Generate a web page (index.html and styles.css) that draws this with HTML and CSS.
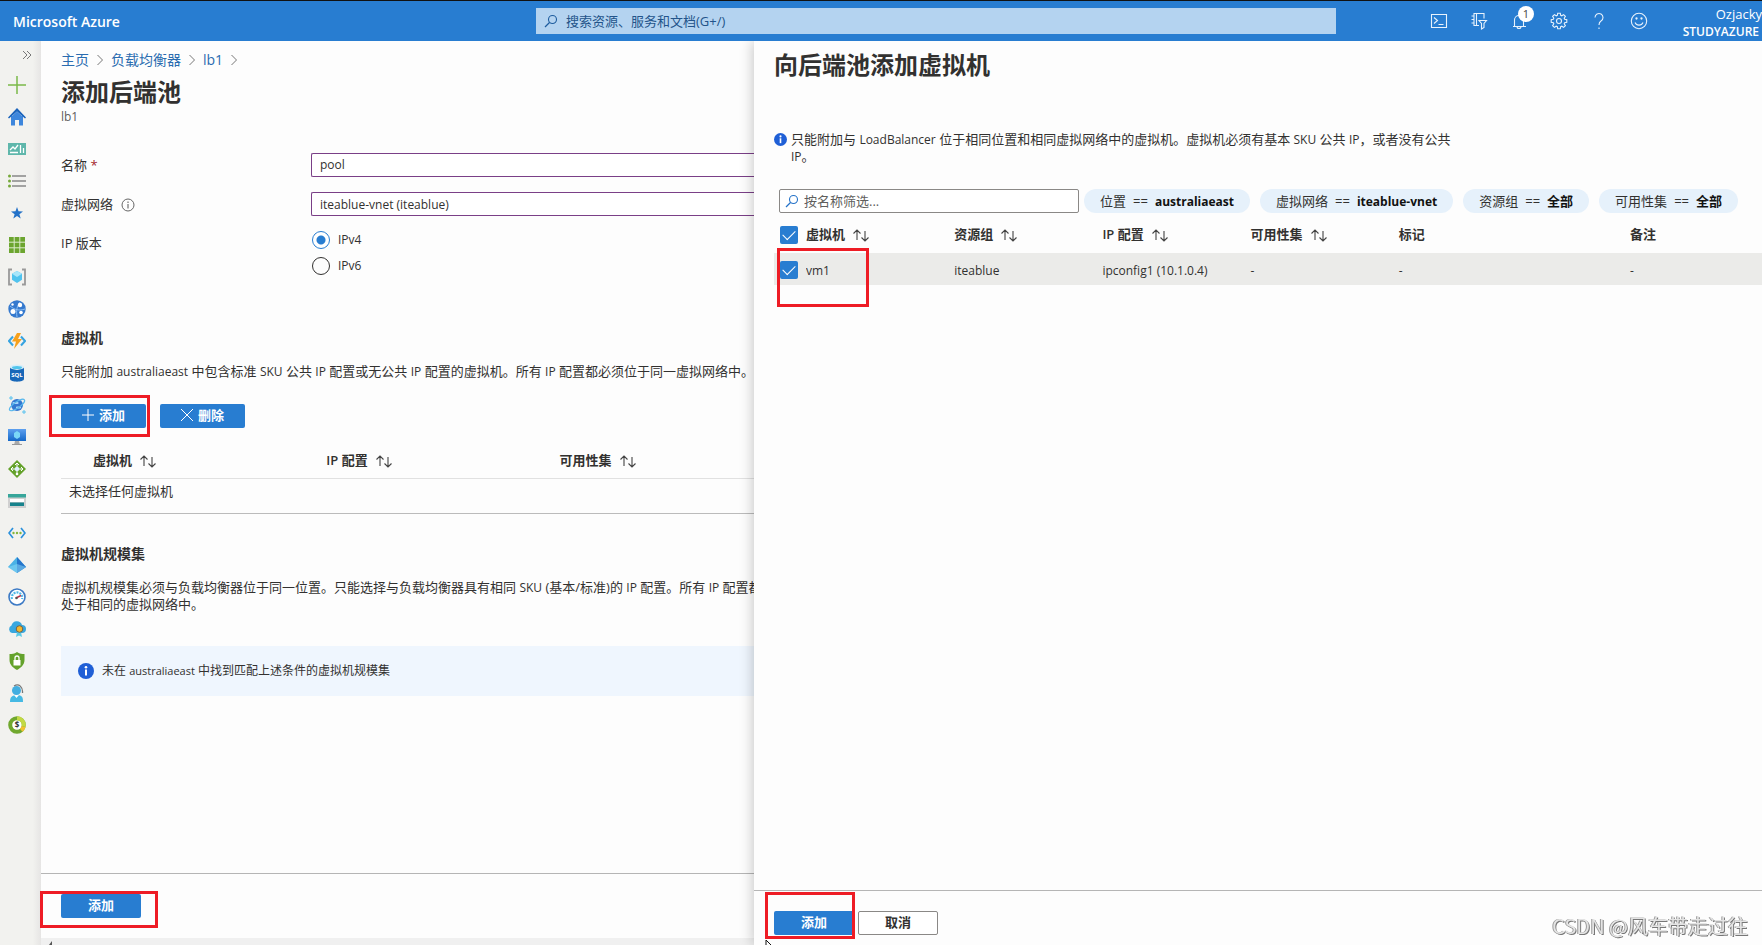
FILE: index.html
```html
<!DOCTYPE html>
<html lang="zh-CN">
<head>
<meta charset="utf-8">
<title>添加后端池 - Microsoft Azure</title>
<link rel="stylesheet" href="styles.css">
</head>
<body>
<svg class="defs" aria-hidden="true">
  <defs>
    <symbol id="sort" viewBox="0 0 18 14"><path d="M5 12V2M1.500 5.500L5 2l3.500 3.500M13 3v10M9.500 9.500L13 13l3.500-3.500" fill="none" stroke="#444" stroke-width="1.100"/></symbol>
    <symbol id="info" viewBox="0 0 16 16"><circle cx="8" cy="8" r="8" fill="#1f5fd6"/><circle cx="8" cy="4.200" r="1.300" fill="#fff"/><path d="M8 6.500v6" stroke="#fff" stroke-width="2"/></symbol>
    <symbol id="search" viewBox="0 0 14 14"><circle cx="8.500" cy="5.500" r="4" fill="none" stroke="currentColor" stroke-width="1.100"/><path d="M5.500 8.500L1 13" stroke="currentColor" stroke-width="1.200"/></symbol>
    <symbol id="crumb" viewBox="0 0 8 12"><path d="M1.500 1l5 5-5 5" fill="none" stroke="#777" stroke-width="1"/></symbol>
    <linearGradient id="gb" x1="0" y1="0" x2="0" y2="1"><stop offset="0" stop-color="#5ea0ef"/><stop offset="1" stop-color="#1468c8"/></linearGradient>
  </defs>
</svg>
<header class="topbar">
  <a class="brand" href="#">Microsoft Azure</a>
  <label class="global-search">
    <svg width="14" height="14"><use href="#search"/></svg>
    <input type="text" placeholder="搜索资源、服务和文档(G+/)" aria-label="搜索">
  </label>
  <nav class="tools">
    <button aria-label="Cloud Shell"><svg width="18" height="18" viewBox="0 0 18 18"><path d="M1.500 2.500h15v13h-15zM4 5.500l3.500 3L4 11.500M8.500 12.500h5"/></svg></button>
    <button aria-label="目录和订阅"><svg width="18" height="18" viewBox="0 0 18 18"><path d="M9 13.500H4v-12h10v5M6.500 1.500v12M1.500 4H4M1.500 7.500H4M1.500 11H4M9 8.500h7.500L14 11.500v4l-2.500 1.500v-5.500z"/></svg></button>
    <button class="bell" aria-label="通知"><svg width="18" height="18" viewBox="0 0 18 18"><path d="M3 14.500h13M4.500 14.500V8a4.500 4.500 0 0 1 9 0v6.500M7 14.500a2 2 0 0 0 4 0"/></svg><span class="badge">1</span></button>
    <button aria-label="设置"><svg width="18" height="18" viewBox="0 0 18 18"><circle cx="9" cy="9" r="2.500"/><path d="M7.700 1.200h2.600l.4 2.100 1.100.5 1.800-1.200 1.800 1.800-1.200 1.800.5 1.100 2.100.4v2.600l-2.100.4-.5 1.100 1.200 1.800-1.800 1.800-1.800-1.200-1.100.5-.4 2.100H7.700l-.4-2.100-1.100-.5-1.800 1.200-1.800-1.800 1.200-1.800-.5-1.100-2.100-.4V7.700l2.100-.4.5-1.100-1.200-1.800 1.800-1.800 1.800 1.200 1.100-.5z"/></svg></button>
    <button aria-label="帮助"><svg width="18" height="18" viewBox="0 0 18 18"><path d="M5 5.500a4 4 0 1 1 6 3.500c-1.500 1-2 1.800-2 4M9 15.500v1.500"/></svg></button>
    <button aria-label="反馈"><svg width="18" height="18" viewBox="0 0 18 18"><circle cx="9" cy="9" r="7.700"/><path d="M5 10.500c1.500 3.500 6.500 3.500 8 0"/><circle cx="6.500" cy="6.500" r=".6"/><circle cx="11.500" cy="6.500" r=".6"/></svg></button>
  </nav>
  <div class="account"><span class="user">Ozjacky</span><span class="tenant">STUDYAZURE</span></div>
</header>

<div class="workspace">
  <nav class="rail" aria-label="收藏夹">
    <button class="expand" aria-label="展开"><svg width="10" height="10" viewBox="0 0 10 10"><path d="M1 1l4 4-4 4M5 1l4 4-4 4" fill="none" stroke="#777"/></svg></button>
    <a href="#" aria-label="创建资源"><svg viewBox="0 0 18 18"><path d="M9 0v18M0 9h18" stroke="#7bb94a" stroke-width="1.500"/></svg></a>
    <a href="#" aria-label="主页"><svg viewBox="0 0 18 18"><path d="M3 8h12v9.500h-4V12H7v5.500H3z" fill="#3d86dc"/><path d="M0 9.500L9 0l9 9.500-1 1L9 3.500l-8 7z" fill="#1b63bb"/><path d="M3 9l6-5.500L15 9z" fill="#3d86dc"/></svg></a>
    <a href="#" aria-label="仪表板"><svg viewBox="0 0 18 18"><path d="M0 3h18v12H0z" fill="#5fb7ab"/><path d="M2 10l3-3 2 2 3-4M2 12.500h8M12.500 5v8M15.500 8v5" fill="none" stroke="#fff" stroke-width="1.300"/></svg></a>
    <a href="#" aria-label="所有服务"><svg viewBox="0 0 18 18"><path d="M4 4h14M4 9h14M4 14h14" stroke="#888" stroke-width="1.400"/><g fill="#76a93a"><circle cx="1.500" cy="4" r="1.500"/><circle cx="1.500" cy="9" r="1.500"/><circle cx="1.500" cy="14" r="1.500"/></g></svg></a>
    <a href="#" aria-label="收藏"><svg viewBox="0 0 18 18"><path d="M9 3l1.500 4.200 4.500.2-3.600 2.800 1.300 4.300L9 12l-3.700 2.500 1.300-4.300L3 7.400l4.500-.2z" fill="#2472c8"/></svg></a>
    <a href="#" aria-label="所有资源"><svg viewBox="0 0 18 18"><path d="M1 1h16v16H1z" fill="#6ca52f"/><path d="M6.200 1v16M11.800 1v16M1 6.200h16M1 11.800h16" stroke="#dcebcb"/></svg></a>
    <a href="#" aria-label="资源组"><svg viewBox="0 0 18 18"><path d="M4 1.500H1v15h3M14 1.500h3v15h-3" fill="none" stroke="#999" stroke-width="1.800"/><path d="M9 3l5 2.800v6L9 15l-5-3.200v-6z" fill="#50c3ee"/><path d="M9 3l5 2.800L9 9 4 5.800z" fill="#a8e6fa"/></svg></a>
    <a href="#" aria-label="应用服务"><svg viewBox="0 0 18 18"><circle cx="9" cy="9" r="8.700" fill="#3479ce"/><path d="M2 6c5 4 9 5 15 3M12 2c-3 4-4 8-3 15" stroke="#8dc0f5" fill="none"/><g fill="#fff"><circle cx="5" cy="11.500" r="2.500"/><circle cx="12" cy="5" r="2.200"/><circle cx="13" cy="12.500" r="1.800"/><circle cx="4.500" cy="4.500" r="1.200"/></g></svg></a>
    <a href="#" aria-label="函数应用"><svg viewBox="0 0 18 18"><path d="M5 4.500L1 9l4 4.500M13 4.500L17 9l-4 4.500" fill="none" stroke="#36a3e0" stroke-width="2"/><path d="M9 1h4l-3 6h4L6 17l2-7.500H4z" fill="#f7a11b"/></svg></a>
    <a href="#" aria-label="SQL 数据库"><svg viewBox="0 0 18 18"><path d="M2 3v12c0 3.500 14 3.500 14 0V3z" fill="#1767b8"/><ellipse cx="9" cy="3.200" rx="7" ry="2.700" fill="#d7eefa"/><ellipse cx="9" cy="3.500" rx="5" ry="1.500" fill="#50c5ec"/><text x="9" y="12.500" class="svg-sql">SQL</text></svg></a>
    <a href="#" aria-label="Azure Cosmos DB"><svg viewBox="0 0 18 18"><circle cx="9" cy="9" r="6" fill="#3478d0"/><path d="M5.500 7h4M9 11.500h3" stroke="#a8d4fa" stroke-width="2.200" stroke-linecap="round"/><ellipse cx="9" cy="9" rx="9" ry="3" fill="none" stroke="#58b8ed" stroke-width="1.200" transform="rotate(-35 9 9)"/><path d="M3 0v4M1 2h4M16 14v4M14 16h4" stroke="#58c2ef"/></svg></a>
    <a href="#" aria-label="虚拟机"><svg viewBox="0 0 18 18"><path d="M0 1h18v12H0z" fill="url(#gb)"/><path d="M9 3l3 2v4l-3 2-3-2V5z" fill="#7ad7f7"/><path d="M7 13h4l1 4H6z" fill="#aaa"/><path d="M4 16.500h10" stroke="#999"/></svg></a>
    <a href="#" aria-label="负载均衡器"><svg viewBox="0 0 18 18"><path d="M9 0l9 9-9 9-9-9z" fill="#64a22b"/><path d="M9 9V3M9 9H3.500M9 9h5.500M9 9v5M7 5l2-2 2 2M5 7L3 9l2 2M13 7l2 2-2 2" fill="none" stroke="#fff" stroke-width="1"/><circle cx="9" cy="9" r="2.200" fill="#dff0ff"/><circle cx="9" cy="14" r="1.300" fill="#fff"/></svg></a>
    <a href="#" aria-label="存储帐户"><svg viewBox="0 0 18 18"><path d="M0 2h18v14H0z" fill="#d0d0d0"/><path d="M0 2h18v3.500H0z" fill="#37a69a"/><path d="M2 7h14v3H2z" fill="#fff"/><path d="M2 10.500h14V14H2z" fill="#17838c"/></svg></a>
    <a href="#" aria-label="虚拟网络"><svg viewBox="0 0 18 18"><path d="M5 4L1 9l4 5M13 4l4 5-4 5" fill="none" stroke="#2b91dc" stroke-width="1.700"/><g fill="#83b73e"><circle cx="5.500" cy="9" r="1.200"/><circle cx="9" cy="9" r="1.200"/><circle cx="12.500" cy="9" r="1.200"/></g></svg></a>
    <a href="#" aria-label="Azure Active Directory"><svg viewBox="0 0 18 18"><path d="M9 1l9 10-9 6-9-6z" fill="#4ab2e6"/><path d="M9 1v16l9-6z" fill="#2676cc"/><path d="M0 11l9-3 9 3-9 6z" fill="#8edcf7" opacity=".5"/></svg></a>
    <a href="#" aria-label="监视器"><svg viewBox="0 0 18 18"><circle cx="9" cy="9" r="8" fill="#fff" stroke="#3c7ac5" stroke-width="1.600"/><path d="M4 11a5.200 5.200 0 1 1 10 0" fill="none" stroke="#4fb9e8" stroke-width="2.200" stroke-dasharray="2 1"/><path d="M8 10l5-2.500" stroke="#c03048" stroke-width="1.400"/><circle cx="8.500" cy="10" r="1.300" fill="#555"/></svg></a>
    <a href="#" aria-label="顾问"><svg viewBox="0 0 18 18"><path d="M4 13a4 4 0 0 1-.5-7.500A5.500 5.500 0 0 1 14 5a4 4 0 0 1 0 8z" fill="#38a7df"/><path d="M9 12l-1 5 3-1.500 3 1.500-1-5z" fill="#58cbe8"/><circle cx="11.500" cy="9" r="3.300" fill="#f3b62d" stroke="#6b6250"/></svg></a>
    <a href="#" aria-label="安全中心"><svg viewBox="0 0 18 18"><path d="M9 0c3 2 5 2 7.500 2v6c0 5-4 8-7.500 10-3.500-2-7.500-5-7.500-10V2C4 2 6 2 9 0z" fill="#64a22b"/><path d="M5.500 8h7v5.500h-7z" fill="#fff"/><path d="M7 8V6a2 2 0 0 1 4 0v2" fill="none" stroke="#fff" stroke-width="1.300"/></svg></a>
    <a href="#" aria-label="帮助和支持"><svg viewBox="0 0 18 18"><path d="M2 18c0-5 2-7 7-7s6 2 6 7z" fill="#45b9e3"/><circle cx="8.500" cy="6.500" r="4.500" fill="#42aee0"/><path d="M6 2c5-3 9 1 8.500 7" fill="none" stroke="#777" stroke-width="1.300"/><path d="M6 11l2.500 3L11 11z" fill="#fff"/></svg></a>
    <a href="#" aria-label="成本管理"><svg viewBox="0 0 18 18"><circle cx="9" cy="9" r="6.800" fill="#fff" stroke="#70a82e" stroke-width="4"/><path d="M9 2.200a6.800 6.800 0 0 1 6.600 8.300" fill="none" stroke="#c3d944" stroke-width="4"/><path d="M15.600 10.500a6.800 6.800 0 0 1-2.400 3.800" fill="none" stroke="#f2c230" stroke-width="4"/><text x="9" y="12" class="svg-dollar">$</text></svg></a>
  </nav>

  <main class="blade">
    <div class="blade-body">
      <nav class="crumbs"><a href="#">主页</a><svg width="8" height="12"><use href="#crumb"/></svg><a href="#">负载均衡器</a><svg width="8" height="12"><use href="#crumb"/></svg><a href="#">lb1</a><svg width="8" height="12"><use href="#crumb"/></svg></nav>
      <h1>添加后端池</h1>
      <p class="subtitle">lb1</p>
      <form class="form">
        <label for="name">名称 <span class="req">*</span></label>
        <input id="name" class="field" type="text" value="pool">
        <label for="vnet">虚拟网络 <svg class="hint" width="14" height="14" viewBox="0 0 14 14"><circle cx="7" cy="7" r="6" fill="none" stroke="#666"/><path d="M7 6v4.500M7 3.500V5" stroke="#555"/></svg></label>
        <select id="vnet" class="field"><option>iteablue-vnet (iteablue)</option></select>
        <span>IP 版本</span>
        <div class="radios">
          <label><input type="radio" name="ip" checked>IPv4</label>
          <label><input type="radio" name="ip">IPv6</label>
        </div>
      </form>
      <h2 class="first">虚拟机</h2>
      <p class="text">只能附加 <span class="en">australiaeast</span> 中包含标准 <span class="en">SKU</span> 公共 <span class="en">IP</span> 配置或无公共 <span class="en">IP</span> 配置的虚拟机。所有 <span class="en">IP</span> 配置都必须位于同一虚拟网络中。</p>
      <div class="actions">
        <span class="mark mark-add"><button class="btn primary"><svg width="12" height="12" viewBox="0 0 12 12"><path d="M6 0v12M0 6h12" stroke="#fff"/></svg>添加</button></span>
        <button class="btn primary"><svg width="12" height="12" viewBox="0 0 12 12"><path d="M0 0l12 12M12 0L0 12" stroke="#fff"/></svg>删除</button>
      </div>
      <table class="vm-table">
        <thead><tr><th>虚拟机<svg width="18" height="14"><use href="#sort"/></svg></th><th>IP 配置<svg width="18" height="14"><use href="#sort"/></svg></th><th>可用性集<svg width="18" height="14"><use href="#sort"/></svg></th></tr></thead>
        <tbody><tr><td colspan="3">未选择任何虚拟机</td></tr></tbody>
      </table>
      <h2>虚拟机规模集</h2>
      <p class="text">虚拟机规模集必须与负载均衡器位于同一位置。只能选择与负载均衡器具有相同 <span class="en">SKU</span> (基本/标准)的 <span class="en">IP</span> 配置。所有 <span class="en">IP</span> 配置都<br>处于相同的虚拟网络中。</p>
      <div class="banner"><svg width="16" height="16"><use href="#info"/></svg><span>未在 <span class="en">australiaeast</span> 中找到匹配上述条件的虚拟机规模集</span></div>
    </div>
    <footer class="blade-footer"><span class="mark mark-submit"><button class="btn primary">添加</button></span></footer>
    <div class="scroll-strip"><svg width="5" height="7" viewBox="0 0 5 7"><path d="M4 3v4L1 7z" fill="#555"/></svg></div>
  </main>

  <aside class="panel">
    <div class="panel-body">
      <h1>向后端池添加虚拟机</h1>
      <div class="note"><svg width="13" height="13"><use href="#info"/></svg><p>只能附加与 <span class="en">LoadBalancer</span> 位于相同位置和相同虚拟网络中的虚拟机。虚拟机必须有基本 <span class="en">SKU</span> 公共 <span class="en">IP</span>，或者没有公共 <span class="en">IP</span>。</p></div>
      <div class="filters">
        <label class="filter-box"><svg width="14" height="14"><use href="#search"/></svg><input type="text" placeholder="按名称筛选..." aria-label="按名称筛选"></label>
        <button class="pill"><span>位置</span><span>==</span><b class="en">australiaeast</b></button>
        <button class="pill"><span>虚拟网络</span><span>==</span><b class="en">iteablue-vnet</b></button>
        <button class="pill"><span>资源组</span><span>==</span><b>全部</b></button>
        <button class="pill"><span>可用性集</span><span>==</span><b>全部</b></button>
      </div>
      <table class="pick-table">
        <colgroup><col class="c-check"><col class="c-std"><col class="c-std"><col class="c-std"><col class="c-std"><col class="c-tag"><col></colgroup>
        <thead><tr><th><input type="checkbox" checked aria-label="全选"></th><th>虚拟机<svg width="18" height="14"><use href="#sort"/></svg></th><th>资源组<svg width="18" height="14"><use href="#sort"/></svg></th><th>IP 配置<svg width="18" height="14"><use href="#sort"/></svg></th><th>可用性集<svg width="18" height="14"><use href="#sort"/></svg></th><th>标记</th><th>备注</th></tr></thead>
        <tbody><tr><td class="mark mark-vm"><input type="checkbox" id="vm1" checked></td><td><label for="vm1">vm1</label></td><td>iteablue</td><td>ipconfig1 (10.1.0.4)</td><td>-</td><td>-</td><td>-</td></tr></tbody>
      </table>
    </div>
    <footer class="panel-footer"><span class="mark mark-confirm"><button class="btn primary">添加</button></span><button class="btn plain">取消</button></footer>
    <svg class="pointer" width="8" height="5" viewBox="0 0 8 5"><path d="M1 5V0l5 5" fill="#fff" stroke="#111"/></svg>
  </aside>
</div>
<div class="watermark">CSDN @风车带走过往</div>
</body>
</html>
```
FILE: styles.css
```css
*, *::before, *::after { box-sizing: border-box; }
body {
  margin: 0;
  height: 100vh;
  display: flex;
  flex-direction: column;
  overflow: hidden;
  background: #fdfdfd;
  color: #323130;
  font: 13px/17px "Open Sans", "Noto Sans CJK SC", sans-serif;
}
h1, h2, p { margin: 0; }
button, input, select { font: inherit; color: inherit; margin: 0; }
a { color: #2a6cb0; text-decoration: none; }
.defs { position: absolute; width: 0; height: 0; }
.en { font-size: 12px; }

.topbar {
  flex: none;
  height: 41px;
  display: grid;
  grid-template-columns: 536fr 800fr 426fr;
  align-items: center;
  position: relative;
  background: #287dd1;
  border-top: 1px solid #111;
  color: #fff;
}
.brand { padding-left: 13px; color: #fff; font-size: 14px; font-weight: 600; }
.global-search {
  display: flex;
  align-items: center;
  gap: 8px;
  height: 26px;
  padding: 0 8px;
  background: #b4d3f0;
  color: #1d5c9e;
}
.global-search input { flex: 1; border: 0; padding: 0; background: none; outline: 0; }
.global-search input::placeholder { color: #23548a; opacity: 1; }
.tools { display: flex; gap: 22px; padding-left: 94px; }
.tools button { position: relative; display: flex; border: 0; padding: 0; background: none; }
.tools svg { fill: none; stroke: #e8f2fc; stroke-width: 1.1; }
.badge {
  position: absolute;
  top: -6px;
  left: 8px;
  width: 16px;
  height: 16px;
  border-radius: 50%;
  background: #fff;
  color: #444;
  font-size: 11px;
  line-height: 16px;
}
.account {
  position: absolute;
  right: 0;
  top: 5px;
  display: flex;
  flex-direction: column;
  align-items: flex-end;
  line-height: 17px;
}
.tenant { padding-right: 3px; font-size: 12px; font-weight: 600; }

.workspace {
  flex: 1;
  min-height: 0;
  display: grid;
  grid-template-columns: 41px 713fr 1008fr;
}
.rail {
  display: flex;
  flex-direction: column;
  padding: 9px 0 0 8px;
  background: linear-gradient(to right, #f2f2ef 80%, #e6e5e4);
}
.expand { display: flex; margin: 0 0 16px 14px; padding: 0; border: 0; background: none; }
.rail a { display: block; height: 32px; }
.rail a svg { display: block; width: 18px; height: 18px; }
.svg-sql { font: bold 6px "Open Sans", sans-serif; fill: #fff; text-anchor: middle; }
.svg-dollar { font: bold 8px "Open Sans", sans-serif; fill: #333; text-anchor: middle; }

.blade { display: flex; flex-direction: column; min-width: 0; }
.blade-body { flex: 1; padding: 9px 0 0 20px; overflow: hidden; white-space: nowrap; }
.crumbs { display: flex; align-items: center; gap: 7px; font-size: 14px; line-height: 20px; }
h1 { font-size: 24px; font-weight: 700; line-height: 32px; }
.blade h1 { margin-top: 6px; }
.subtitle { font-size: 12px; line-height: 17px; color: #605e5c; }
.form {
  display: grid;
  grid-template-columns: 250px 1fr;
  gap: 15px 0;
  margin-top: 28px;
  line-height: 24px;
}
.req { color: #a4262c; }
.hint { margin-left: 5px; vertical-align: -3px; }
.field {
  width: 100%;
  height: 24px;
  padding: 0 8px;
  appearance: none;
  border: 1px solid #7a3f87;
  border-right: 0;
  border-radius: 2px 0 0 2px;
  background: #fff;
  font-size: 12px;
}
.radios { display: flex; flex-direction: column; gap: 8px; font-size: 12px; }
.radios label { display: flex; align-items: center; gap: 8px; line-height: 18px; }
.radios input {
  appearance: none;
  width: 18px;
  height: 18px;
  margin-left: 1px;
  border: 1px solid #323130;
  border-radius: 50%;
}
.radios input:checked { border-color: #287dd1; background: radial-gradient(circle, #287dd1 4px, #fff 5px); }
h2 { margin-top: 30px; font-size: 14px; font-weight: 700; line-height: 20px; }
h2.first { margin-top: 53px; }
.text { margin-top: 15px; }
.actions { display: flex; gap: 14px; margin-top: 24px; }
.btn {
  display: flex;
  align-items: center;
  justify-content: center;
  gap: 5px;
  width: 80px;
  height: 24px;
  padding: 0 0 2px;
  border: 0;
  border-radius: 2px;
  font-weight: 700;
}
.actions .btn { width: 85px; }
.primary { background: #287dd1; color: #fff; }
.plain { border: 1px solid #8a8886; background: #fff; }

/* Highlight frames drawn over the controls */
.mark { position: relative; }
.mark::after { content: ""; position: absolute; z-index: 2; border: 3px solid #ee1c25; pointer-events: none; }
.mark-add::after { inset: -9px -4px -9px -12px; }
.mark-submit::after { inset: -3px -17px -10px -21px; }
.mark-confirm::after { inset: -19px -1px -4px -9px; }
.mark-vm::after { left: 3px; top: -5px; width: 92px; height: 59px; }

table { border-collapse: collapse; table-layout: fixed; width: 100%; }
th { padding: 0; text-align: left; font-weight: 600; }
th svg { margin-left: 7px; vertical-align: -3px; }
td { padding: 0; }
.vm-table { width: 101%; margin-top: 15px; border-bottom: 1px solid #bbb; }
.vm-table th { height: 35px; padding: 0 0 0 32px; border-bottom: 1px solid #e1e1e1; }
.vm-table td { height: 35px; padding: 0 0 8px 8px; }
.banner {
  display: flex;
  align-items: center;
  gap: 8px;
  height: 50px;
  margin-top: 33px;
  padding-left: 17px;
  background: #eff6fe;
  font-size: 12px;
}
.banner .en { font-size: 11px; }
.blade-footer {
  display: flex;
  align-items: flex-start;
  height: 65px;
  padding: 20px 20px 0;
  border-top: 1px solid #b5b5b5;
}
.scroll-strip { display: flex; padding-left: 7px; height: 7px; background: #f0f0f0; }

.panel {
  position: relative;
  display: flex;
  flex-direction: column;
  min-width: 0;
  background: #fdfdfd;
  box-shadow: -2px 0 12px rgba(0, 0, 0, .2);
  clip-path: inset(0 0 0 -20px);
}
.panel-body { flex: 1; padding: 8px 0 0 20px; }
.note { display: flex; gap: 4px; margin-top: 50px; max-width: 690px; }
.note svg { flex: none; margin-top: 2px; }
.filters { display: flex; gap: 10px; margin-top: 24px; padding-left: 5px; }
.filter-box {
  flex: 0 1 300px;
  display: flex;
  align-items: center;
  gap: 5px;
  min-width: 0;
  height: 24px;
  margin-right: -5px;
  padding: 0 5px;
  border: 1px solid #8a8886;
  border-radius: 2px;
  background: #fff;
  color: #2472c8;
}
.filter-box input { flex: 1; min-width: 0; border: 0; padding: 0; outline: 0; background: none; }
.filter-box input::placeholder { color: #605e5c; opacity: 1; }
.pill {
  display: flex;
  align-items: center;
  gap: 7px;
  height: 24px;
  padding: 0 16px;
  border: 0;
  border-radius: 12px;
  background: #e6f1fb;
  white-space: nowrap;
}
.pill b { color: #111; }
.pick-table .c-check { width: 32px; }
.pick-table .c-std { width: 15%; }
.pick-table .c-tag { width: 23.4%; }
.pick-table th { height: 40px; padding-top: 3px; }
.pick-table td { height: 32px; padding-top: 2px; background: #ebebe9; font-size: 12px; }
.pick-table input {
  display: block;
  appearance: none;
  width: 18px;
  height: 18px;
  margin-left: 6px;
  border-radius: 2px;
  background: #287dd1;
}
.pick-table input::after {
  content: "";
  display: block;
  width: 12px;
  height: 7px;
  margin: 0 3px;
  border: solid #fff;
  border-width: 0 0 1px 1px;
  transform: translateY(4px) rotate(-45deg);
}
.panel-footer {
  display: flex;
  align-items: flex-start;
  gap: 4px;
  height: 55px;
  padding: 20px 20px 0;
  border-top: 1px solid #b5b5b5;
}
.pointer { position: absolute; left: 11px; bottom: 0; }
.watermark {
  position: fixed;
  right: 14px;
  bottom: 4px;
  color: #e4e4e4;
  font: 20px/30px "Noto Sans CJK SC", sans-serif;
  text-shadow: 1px 1px 0 #777, -1px 0 0 #999;
}
```
